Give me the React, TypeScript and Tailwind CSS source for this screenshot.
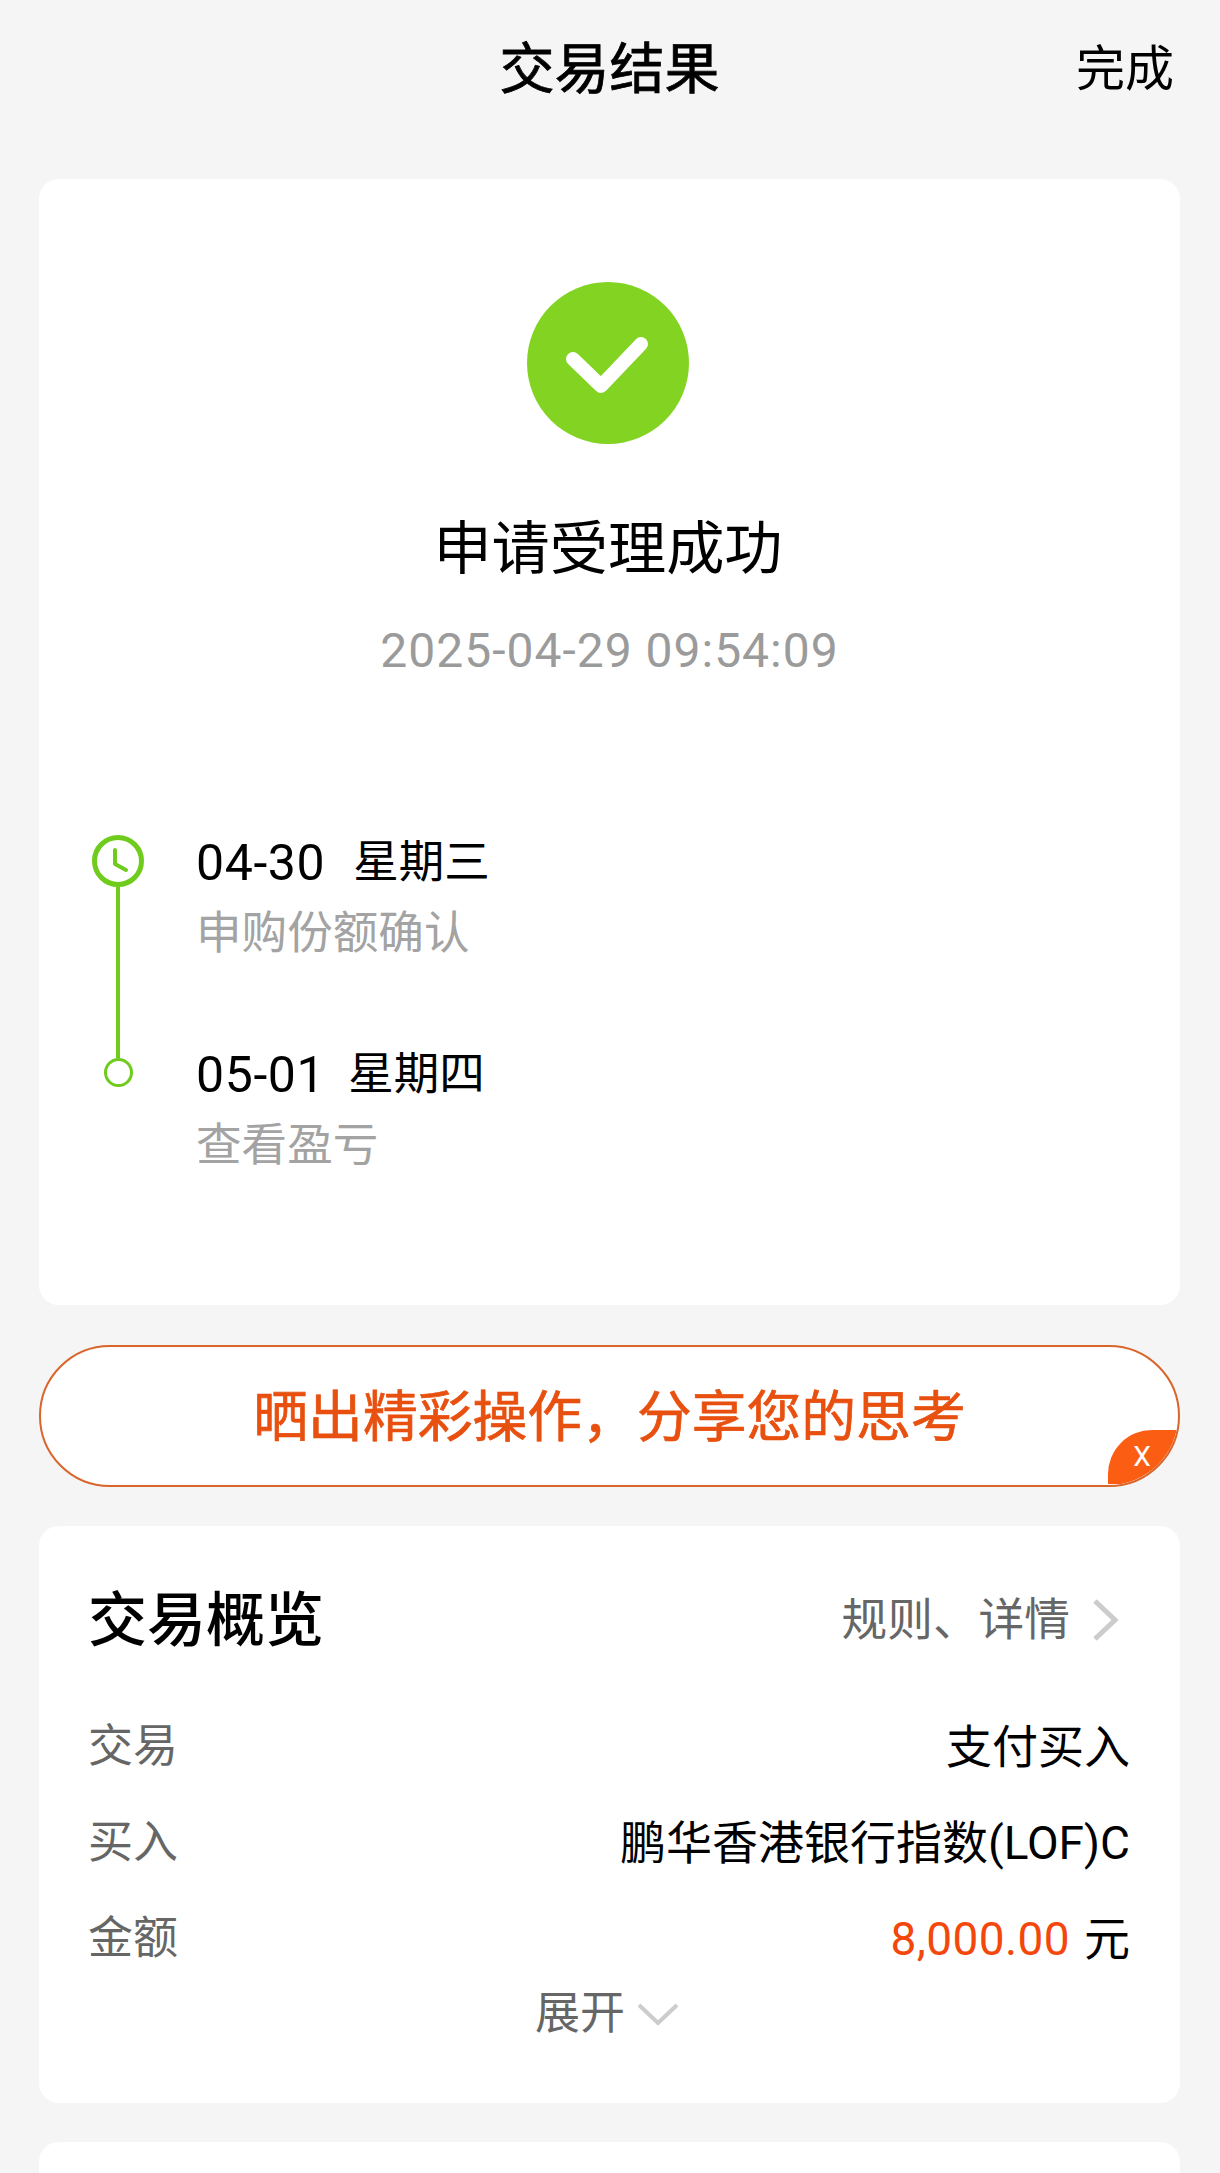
const cjk = "font-['Roboto','Noto_Sans_CJK_SC',sans-serif]";

const ROWS = [
  { label: "交易", value: "支付买入" },
  { label: "买入", value: "鹏华香港银行指数(LOF)C" },
];

function SuccessIcon() {
  return (
    <svg width="162" height="162" viewBox="0 0 162 162" className="block">
      <circle cx="81" cy="81" r="81" fill="#82d322" />
      <path d="M46 77 L74 104 L114 62" fill="none" stroke="#fff" strokeWidth="14" strokeLinecap="round" strokeLinejoin="round" />
    </svg>
  );
}

function ClockIcon() {
  return (
    <svg width="52" height="52" viewBox="0 0 52 52" className="block">
      <circle cx="26" cy="26" r="23.5" fill="#fff" stroke="#6fcb1c" strokeWidth="5" />
      <path d="M23 15 V29 L34 35" fill="none" stroke="#6fcb1c" strokeWidth="4" strokeLinecap="round" strokeLinejoin="round" />
    </svg>
  );
}

function Step({ date, week, note, gap }: { date: string; week: string; note: string; gap: string }) {
  return (
    <div>
      <div className="flex h-[60px] items-center pt-[1px] leading-[60px] text-black">
        <span className="text-[50px] tracking-[0.6px]">{date}</span>
        <span className={`text-[45.5px] ${gap}`}>{week}</span>
      </div>
      <div className="mt-[12px] text-[45.6px] leading-[60px] text-[#a3a3a3]">{note}</div>
    </div>
  );
}

export default function App() {
  return (
    <div className={`flex h-[2173px] w-[1220px] flex-col overflow-hidden bg-[#f5f5f5] pl-[39px] pr-[40px] ${cjk}`}>
      {/* Header */}
      <div className="mb-[43px] grid h-[136px] grid-cols-[1fr_auto_1fr] items-center pt-[2px]">
        <div />
        <div className="text-[55px] leading-none text-black [-webkit-text-stroke:0.8px_black]">交易结果</div>
        <div className="pr-[6px] text-right text-[49px] leading-none text-black">完成</div>
      </div>

      {/* Result card */}
      <div className="rounded-[20px] bg-white pb-[129px] pt-[103px]">
        <div className="flex flex-col items-center">
          <div className="mr-[4px]">
            <SuccessIcon />
          </div>
          <div className="mr-[3px] mt-[70px] text-[58.2px] leading-[70px] text-black">申请受理成功</div>
          <div className="mt-[37px] text-[48px] leading-[60px] tracking-[1px] text-[#9b9b9b]">2025-04-29 09:54:09</div>
        </div>
        <div className="mt-[151px] flex pl-[53px]">
          <div className="flex w-[52px] flex-col items-center pt-[3px]">
            <ClockIcon />
            <div className="h-[171px] w-[4px] bg-[#6fcb1c]" />
            <div className="h-[29px] w-[29px] rounded-full border-[3px] border-[#6fcb1c]" />
          </div>
          <div className="ml-[52px] flex flex-col gap-[80px]">
            <Step date="04-30" week="星期三" note="申购份额确认" gap="ml-[28px]" />
            <Step date="05-01" week="星期四" note="查看盈亏" gap="ml-[23px]" />
          </div>
        </div>
      </div>

      {/* Share banner */}
      <div className="relative mt-[40px] flex h-[142px] items-center justify-center overflow-hidden rounded-full border-2 border-[#d9652a] bg-white pt-[2px]">
        <span className="text-[54.8px] leading-none text-[#e8500f] [-webkit-text-stroke:0.7px_#e8500f]">晒出精彩操作，分享您的思考</span>
        <div className="absolute bottom-[1px] right-0 flex h-[54px] w-[70px] items-center justify-center rounded-tl-[44px] bg-[#fb5e13] pr-[2px] text-[28px] leading-none text-white">
          X
        </div>
      </div>

      {/* Overview card */}
      <div className="mt-[39px] rounded-[20px] bg-white px-[50px] pb-[60px] pt-[58px]">
        <div className="flex h-[70px] items-center justify-between pt-[3px]">
          <div className="-ml-[1px] text-[59px] font-medium leading-none text-black">交易概览</div>
          <div className="flex items-center pr-[11px]">
            <span className="text-[45.7px] leading-none text-[#666]">规则、详情</span>
            <svg width="27" height="44" viewBox="0 0 27 44" className="ml-[22px] block">
              <path d="M3 3 L23 22 L3 41" fill="none" stroke="#ccc" strokeWidth="5" />
            </svg>
          </div>
        </div>
        <div className="mt-[61px] flex flex-col gap-[36px]">
          {ROWS.map((row) => (
            <div key={row.label} className="flex h-[60px] items-center justify-between pt-[4px]">
              <span className="-ml-[1px] text-[45px] text-[#666]">{row.label}</span>
              <span className="text-[46px] text-black">{row.value}</span>
            </div>
          ))}
          <div className="flex h-[60px] items-center justify-between pt-[4px]">
            <span className="-ml-[1px] text-[45px] text-[#666]">金额</span>
            <span className="flex items-center text-[46px] text-black">
              <span className="tracking-[0.4px] text-[#f4470b]">8,000.00</span>
              <span className="ml-[14px]">元</span>
            </span>
          </div>
        </div>
        <div className="mr-[5px] mt-[16px] flex h-[60px] items-center justify-center pt-[2px]">
          <span className="text-[45px] text-[#666]">展开</span>
          <svg width="42" height="24" viewBox="0 0 42 24" className="ml-[12px] block">
            <path d="M2 3 L21 21 L40 3" fill="none" stroke="#ccc" strokeWidth="4" />
          </svg>
        </div>
      </div>

      {/* Next card, cut off by the bottom of the page */}
      <div className="mt-[39px] flex-1 rounded-t-[20px] bg-white" />
    </div>
  );
}
